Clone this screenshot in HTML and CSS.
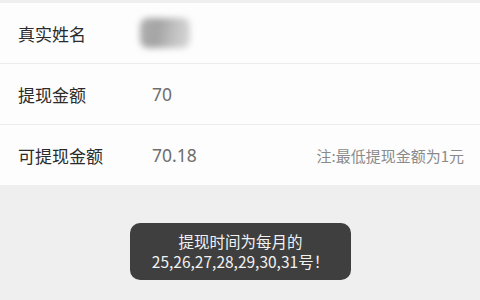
FILE: index.html
```html
<!DOCTYPE html>
<html lang="zh">
<head>
<meta charset="utf-8">
<link rel="stylesheet" href="styles.css">
</head>
<body>
<div class="page">
  <div class="list">
    <div class="row">
      <span class="label">真实姓名</span>
      <span class="value"><span class="blur"></span></span>
    </div>
    <div class="row">
      <span class="label">提现金额</span>
      <span class="value">70</span>
    </div>
    <div class="row">
      <span class="label">可提现金额</span>
      <span class="value">70.18</span>
      <span class="note">注:最低提现金额为1元</span>
    </div>
  </div>
  <div class="toast">
    <div class="line">提现时间为每月的</div>
    <div class="line">25,26,27,28,29,30,31号！</div>
  </div>
</div>
</body>
</html>
```
FILE: styles.css
```css
html, body {
  margin: 0;
  padding: 0;
  width: 480px;
  height: 300px;
  overflow: hidden;
  background: #efeff0;
  font-family: "Noto Sans CJK SC", "Noto Sans", sans-serif;
}
.page {
  position: relative;
  width: 480px;
  height: 300px;
  padding-top: 3px;
  box-sizing: border-box;
}
.list {
  background: #fdfdfd;
}
.row {
  display: flex;
  align-items: center;
  height: 60px;
  padding: 0 18px;
  border-bottom: 1px solid #ececec;
}
.row:last-child {
  border-bottom: none;
}
.label {
  width: 134px;
  font-size: 17px;
  color: #2b2b2b;
}
.value {
  flex: 1;
  font-size: 17.5px;
  color: #6e6e6e;
  font-family: "Noto Sans", "Noto Sans CJK SC", sans-serif;
}
.blur {
  display: block;
  width: 50px;
  height: 30px;
  margin-left: -12px;
  background: linear-gradient(100deg, #b0b0b0 0%, #a4a4a4 35%, #c4c4c4 70%, #d8d8d8 100%);
  border-radius: 8px;
  filter: blur(3px);
}
.note {
  font-size: 15px;
  color: #8a8a8a;
  margin-right: -2px;
}
.toast {
  position: absolute;
  left: 130px;
  top: 223px;
  width: 221px;
  height: 57px;
  box-sizing: border-box;
  background: #3f3f3f;
  border-radius: 10px;
  color: #f2f2f2;
  font-size: 15.5px;
  text-align: center;
  padding-top: 8px;
}
.line {
  height: 20px;
  line-height: 20px;
  overflow: visible;
  white-space: nowrap;
}
```
